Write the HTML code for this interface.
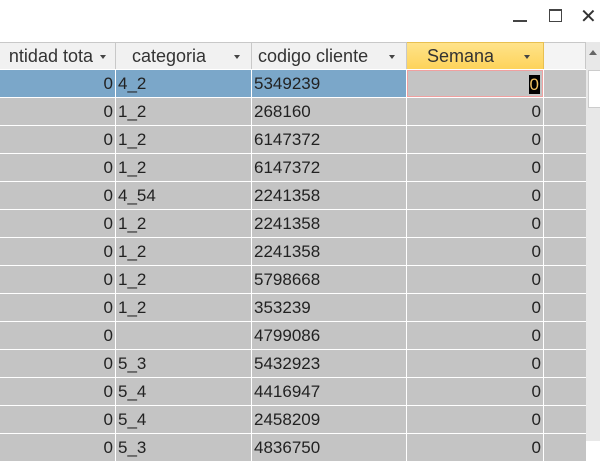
<html><head><style>
body{margin:0;width:600px;height:441px;background:#fff;position:relative;overflow:hidden;font-family:"Liberation Sans",sans-serif;font-size:17px;color:#222}
.c{position:absolute;height:27px;line-height:28px;background:#c4c4c4;box-sizing:border-box;white-space:nowrap;overflow:hidden}
.h{position:absolute;top:42px;height:27px;line-height:27px;font-size:18px;background:#f1f1f1;border-right:1px solid #c8c8c8;border-top:1px solid #c8c8c8;box-sizing:border-box;color:#333;white-space:nowrap;overflow:hidden}
.ar{position:absolute;top:12px;width:0;height:0;border-left:3.5px solid transparent;border-right:3.5px solid transparent;border-top:4px solid #444}
.r{text-align:right;padding-right:2px}
.l{padding-left:2px}
</style></head><body>
<div style="position:absolute;left:513px;top:20px;width:14px;height:2px;background:#444"></div>
<div style="position:absolute;left:549px;top:9px;width:13px;height:13px;border:1.5px solid #444;border-top-width:2px;box-sizing:border-box"></div>
<div style="position:absolute;left:580px;top:4px;font-size:20px;color:#333">✕</div>

<div class="h" style="left:0;width:116px;padding-right:22px;"><span style="position:absolute;right:22px">ntidad tota</span><div class="ar" style="left:100px"></div></div>
<div class="h" style="left:116px;width:136px;padding-left:16px">categoria<div class="ar" style="left:118px"></div></div>
<div class="h" style="left:252px;width:155px;padding-left:6px">codigo cliente<div class="ar" style="left:137px"></div></div>
<div class="h" style="left:407px;width:137px;padding-left:20px;background:linear-gradient(#ffe38a,#fdd35a);border-color:#e8c050">Semana<div class="ar" style="left:117px"></div></div>
<div class="h" style="left:544px;width:42px;background:#f4f4f4"></div>
<div style="position:absolute;left:586px;top:42px;width:14px;height:399px;background:#e8e8e8"></div>
<div style="position:absolute;left:589px;top:50px;width:0;height:0;border-left:4px solid transparent;border-right:4px solid transparent;border-bottom:5px solid #666"></div>
<div style="position:absolute;left:588px;top:70px;width:12px;height:36px;background:#fff;border:1px solid #ccc"></div>

<div id="g"></div>
<script>
var d=[["0","4_2","5349239"],["0","1_2","268160"],["0","1_2","6147372"],["0","1_2","6147372"],["0","4_54","2241358"],["0","1_2","2241358"],["0","1_2","2241358"],["0","1_2","5798668"],["0","1_2","353239"],["0","","4799086"],["0","5_3","5432923"],["0","5_4","4416947"],["0","5_4","2458209"],["0","5_3","4836750"]];
var h="";
for(var i=0;i<d.length;i++){var t=70+i*28;var sel=i==0;var bg=sel?"background:#7ba7c9;":"";
h+='<div class="c r" style="top:'+t+'px;left:0;width:115px;'+bg+'">'+d[i][0]+'</div>';
h+='<div class="c l" style="top:'+t+'px;left:116px;width:135px;'+bg+'">'+d[i][1]+'</div>';
h+='<div class="c l" style="top:'+t+'px;left:252px;width:154px;'+bg+'">'+d[i][2]+'</div>';
h+='<div class="c r" style="top:'+t+'px;left:407px;width:136px;'+(sel?'border:1.5px solid #f0a0a0;':'')+'">'+(sel?'<span style="background:#000;color:#f0c060;padding:0 1px">0</span>':'0')+'</div>';
h+='<div class="c" style="top:'+t+'px;left:544px;width:42px;"></div>';}
document.getElementById("g").innerHTML=h;
</script>
</body></html>
